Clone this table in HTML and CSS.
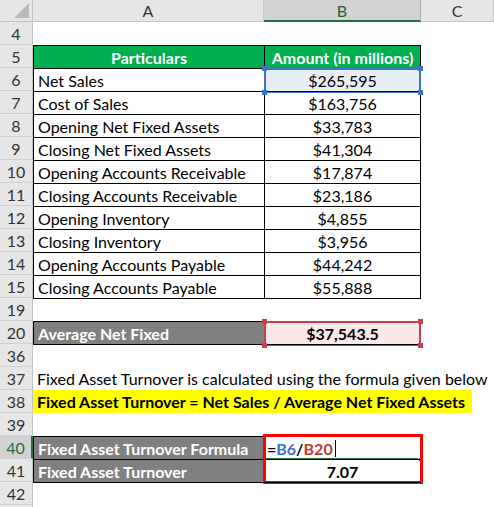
FILE: index.html
```html
<!DOCTYPE html>
<html>
<head>
<meta charset="utf-8">
<link rel="stylesheet" href="styles.css">
</head>
<body>
<div class="sheet">
  <div class="row hdr">
    <div class="corner"><span class="tri"></span></div>
    <div class="ch">A</div>
    <div class="ch csel">B</div>
    <div class="ch">C</div>
  </div>

  <div class="row"><div class="rh">4</div><div class="c"></div><div class="c"></div><div class="c"></div></div>
  <div class="row"><div class="rh">5</div><div class="c a bx green th">Particulars</div><div class="c b bx green th">Amount (in millions)</div><div class="c"></div></div>

  <div class="row"><div class="rh">6</div><div class="c a bx">Net Sales</div><div class="c b bx num selblue"><span class="hd tl"></span><span class="hd tr"></span><span class="hd bl"></span><span class="hd br"></span>$265,595</div><div class="c"></div></div>
  <div class="row"><div class="rh">7</div><div class="c a bx">Cost of Sales</div><div class="c b bx num">$163,756</div><div class="c"></div></div>
  <div class="row"><div class="rh">8</div><div class="c a bx">Opening Net Fixed Assets</div><div class="c b bx num">$33,783</div><div class="c"></div></div>
  <div class="row"><div class="rh">9</div><div class="c a bx">Closing Net Fixed Assets</div><div class="c b bx num">$41,304</div><div class="c"></div></div>
  <div class="row"><div class="rh">10</div><div class="c a bx">Opening Accounts Receivable</div><div class="c b bx num">$17,874</div><div class="c"></div></div>
  <div class="row"><div class="rh">11</div><div class="c a bx">Closing Accounts Receivable</div><div class="c b bx num">$23,186</div><div class="c"></div></div>
  <div class="row"><div class="rh">12</div><div class="c a bx">Opening Inventory</div><div class="c b bx num">$4,855</div><div class="c"></div></div>
  <div class="row"><div class="rh">13</div><div class="c a bx">Closing Inventory</div><div class="c b bx num">$3,956</div><div class="c"></div></div>
  <div class="row"><div class="rh">14</div><div class="c a bx">Opening Accounts Payable</div><div class="c b bx num">$44,242</div><div class="c"></div></div>
  <div class="row"><div class="rh">15</div><div class="c a bx">Closing Accounts Payable</div><div class="c b bx num">$55,888</div><div class="c"></div></div>

  <div class="row"><div class="rh">19</div><div class="c a tline"></div><div class="c b tline"></div><div class="c"></div></div>
  <div class="row"><div class="rh">20</div><div class="c a bx gray th">Average Net Fixed</div><div class="c b bx num bold selred"><span class="hd tl"></span><span class="hd tr"></span><span class="hd bl"></span><span class="hd br"></span>$37,543.5</div><div class="c"></div></div>
  <div class="row"><div class="rh">36</div><div class="c a tline"></div><div class="c b tline"></div><div class="c"></div></div>

  <div class="row"><div class="rh">37</div><div class="c span txt">Fixed Asset Turnover is calculated using the formula given below</div></div>
  <div class="row"><div class="rh">38</div><div class="c span"><span class="yellow">Fixed Asset Turnover = Net Sales / Average Net Fixed Assets</span></div></div>
  <div class="row"><div class="rh">39</div><div class="c"></div><div class="c"></div><div class="c"></div></div>

  <div class="group">
    <div class="row"><div class="rh rsel">40</div><div class="c a bx gray th">Fixed Asset Turnover Formula</div><div class="c b bx formula"><span>=</span><span class="blue">B6</span>/<span class="red">B20</span><span class="caret"></span><span class="active"></span><span class="active-h"></span></div><div class="c"></div></div>
    <div class="row"><div class="rh">41</div><div class="c a bx gray th">Fixed Asset Turnover</div><div class="c b bx num bold">7.07</div><div class="c"></div></div>
    <div class="redbox"></div>
  </div>

  <div class="row"><div class="rh">42</div><div class="c a tline"></div><div class="c b tline"></div><div class="c"></div></div>
  <div class="row"><div class="rh"></div><div class="c"></div><div class="c"></div><div class="c"></div></div>
</div>
</body>
</html>
```

FILE: styles.css
```css
html, body {
  margin: 0;
  padding: 0;
  background: #ffffff;
}
body {
  font-family: Lato, "Liberation Sans", sans-serif;
  font-size: 16px;
  color: #000;
}
.sheet {
  width: 494px;
  height: 507px;
  overflow: hidden;
}
.row {
  display: grid;
  grid-template-columns: 33px 231px 157px 1fr;
  height: 23px;
}
.row.hdr {
  height: 22px;
}
.corner {
  position: relative;
  background: #e6e6e6;
  border-right: 1px solid #c4c4c4;
  border-bottom: 1px solid #c4c4c4;
}
.tri {
  position: absolute;
  right: 3px;
  bottom: 3px;
  width: 0;
  height: 0;
  border-left: 15px solid transparent;
  border-bottom: 15px solid #b9b9b9;
}
.ch {
  background: #e6e6e6;
  border-right: 1px solid #c8c8c8;
  border-bottom: 1px solid #c4c4c4;
  display: flex;
  align-items: center;
  justify-content: center;
  color: #333;
  font-size: 16px;
}
.ch.csel {
  background: #d2d2d2;
  color: #1f6140;
  border-bottom: 2px solid #217346;
  border-right: 1px solid #b0b0b0;
}
.rh {
  background: #e6e6e6;
  border-right: 1px solid #c4c4c4;
  border-bottom: 1px solid #d0d0d0;
  display: flex;
  align-items: center;
  justify-content: center;
  color: #333;
  box-sizing: border-box;
}
.rh.rsel {
  background: #d2d2d2;
  color: #217346;
  border-right: 2px solid #217346;
}
.c {
  box-sizing: border-box;
  display: flex;
  align-items: center;
  white-space: nowrap;
  padding: 0 4px;
  position: relative;
}
.bx {
  border-top: 1px solid #000;
  border-left: 1px solid #000;
}
.b.bx {
  border-right: 1px solid #000;
}
.tline {
  border-top: 1px solid #000;
}
.num {
  justify-content: center;
}
.bold {
  font-weight: 700;
}
.th {
  font-weight: 700;
  color: #fff;
}
.green {
  background: #00b050;
  justify-content: center;
}
.gray {
  background: #808080;
}
.span {
  grid-column: 2 / 5;
  overflow: visible;
}
.yellow {
  background: #ffff00;
  font-weight: 700;
  display: block;
  width: 435px;
  height: 23px;
  line-height: 23px;
  margin-left: -4px;
  padding-left: 4px;
}
.selblue {
  background: #e8eef8;
}
.selblue::after {
  content: "";
  position: absolute;
  left: -1px;
  top: -1px;
  right: -1px;
  bottom: -2px;
  border: 2px solid #3f72c9;
}
.selred {
  background: #fbe9ea;
}
.selred::after {
  content: "";
  position: absolute;
  left: -1px;
  top: -1px;
  right: -1px;
  bottom: -2px;
  border: 2px solid #c8404e;
}
.hd {
  position: absolute;
  width: 5px;
  height: 5px;
  z-index: 2;
}
.selblue .hd { background: #3f72c9; }
.selred .hd { background: #c8404e; }
.hd.tl { left: -3px; top: -3px; }
.hd.tr { right: -3px; top: -3px; }
.hd.bl { left: -3px; bottom: -4px; }
.hd.br { right: -3px; bottom: -4px; }
.formula {
  font-weight: 700;
  padding-left: 2px;
}
.blue { color: #3d6fce; }
.red { color: #c0392b; }
.caret {
  display: inline-block;
  width: 1px;
  height: 17px;
  background: #000;
  margin-left: 2px;
}
.active {
  position: absolute;
  left: 0;
  bottom: -1px;
  width: 153px;
  height: 2px;
  background: #217346;
}
.active-h {
  position: absolute;
  left: 154px;
  bottom: -2px;
  width: 3px;
  height: 3px;
  background: #217346;
}
.group {
  position: relative;
}
.redbox {
  position: absolute;
  left: 263px;
  top: -2px;
  width: 160px;
  height: 50px;
  box-sizing: border-box;
  border: 3px solid #ff0000;
  pointer-events: none;
}
```
